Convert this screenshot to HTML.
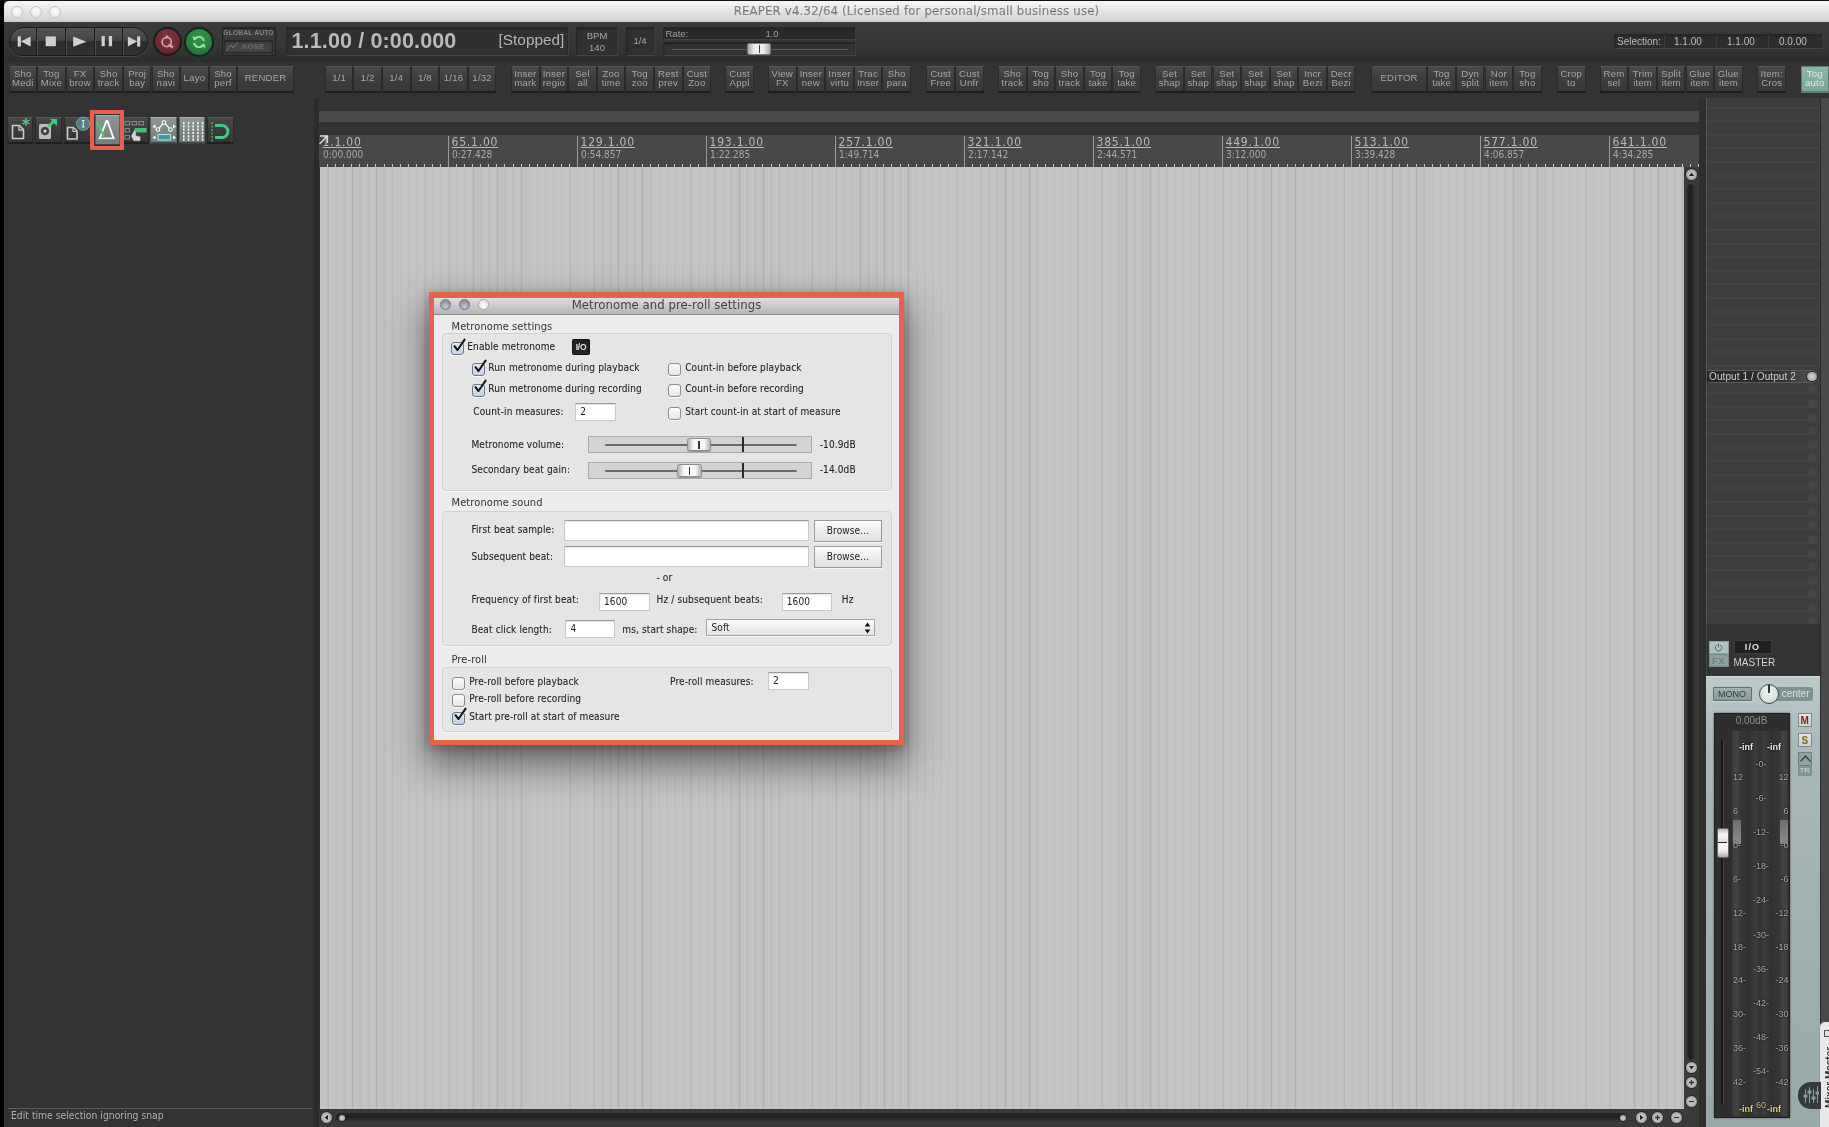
<!DOCTYPE html><html><head><meta charset="utf-8"><title>REAPER</title><style>
*{box-sizing:border-box;margin:0;padding:0}
html,body{width:1829px;height:1127px;overflow:hidden;background:#333;}
body{position:relative;will-change:transform;font-family:"Liberation Sans",sans-serif;color:#b4b4b4;}
.abs{position:absolute}
.lg{font-family:"DejaVu Sans Condensed","DejaVu Sans",sans-serif;}
#titlebar{left:4px;top:1px;width:1825px;height:21px;background:linear-gradient(#f6f6f6,#e4e4e4 50%,#cfcfcf);border-radius:5px 0 0 0;}
#titlebar .t{position:absolute;left:0;right:0;top:3.2px;text-align:center;font-size:13px;color:#898989;letter-spacing:.2px}
.tl{position:absolute;top:5px;width:12px;height:12px;border-radius:50%;border:1px solid #c4c4c4;background:radial-gradient(circle at 50% 30%,#fafafa,#e6e6e6);}
#topbar{left:4px;top:22px;width:1825px;height:40px;background:linear-gradient(#3b3b3b,#353535 60%,#2c2c2c);}
#toolrow{left:4px;top:62px;width:1825px;height:36px;background:#333;}
.tb{position:absolute;top:66px;height:27px;width:28.6px;background:linear-gradient(#4a4a4a,#3d3d3d 50%,#383838);border:1px solid #2a2a2a;border-top-color:#555;border-bottom:2px solid #1e1e1e;font-size:9.6px;letter-spacing:.2px;line-height:9px;color:#a6a6a6;text-align:center;overflow:hidden;white-space:nowrap;padding-top:2px}
.tb.one{line-height:21px;padding-top:0}
.tb.on{background:linear-gradient(#8fb5a8,#7da597);color:#d8ebe4;border-color:#5b7f72}
</style></head><body>
<div class="abs" style="left:0;top:0;width:4px;height:1127px;background:#000"></div>
<div class="abs" style="left:0;top:0;width:1829px;height:1px;background:#111"></div>
<div id="titlebar" class="abs lg"><span class="tl" style="left:7px"></span><span class="tl" style="left:26px"></span><span class="tl" style="left:45px"></span><div class="t">REAPER v4.32/64 (Licensed for personal/small business use)</div></div>
<div id="topbar" class="abs"></div>
<div id="toolrow" class="abs"></div>
<div class="tb" style="left:8.5px;width:28.6px">Sho<br>Medi</div>
<div class="tb" style="left:37.1px;width:28.6px">Tog<br>Mixe</div>
<div class="tb" style="left:65.7px;width:28.6px">FX<br>brow</div>
<div class="tb" style="left:94.3px;width:28.6px">Sho<br>track</div>
<div class="tb" style="left:122.9px;width:28.6px">Proj<br>bay</div>
<div class="tb" style="left:151.5px;width:28.6px">Sho<br>navi</div>
<div class="tb one" style="left:180.1px;width:28.6px">Layo</div>
<div class="tb" style="left:208.7px;width:28.6px">Sho<br>perf</div>
<div class="tb one" style="left:237.3px;width:56.5px">RENDER</div>
<div class="tb one" style="left:324.8px;width:28.6px">1/1</div>
<div class="tb one" style="left:353.4px;width:28.6px">1/2</div>
<div class="tb one" style="left:382.0px;width:28.6px">1/4</div>
<div class="tb one" style="left:410.6px;width:28.6px">1/8</div>
<div class="tb one" style="left:439.2px;width:28.6px">1/16</div>
<div class="tb one" style="left:467.8px;width:28.6px">1/32</div>
<div class="tb" style="left:511.0px;width:28.6px">Inser<br>mark</div>
<div class="tb" style="left:539.6px;width:28.6px">Inser<br>regio</div>
<div class="tb" style="left:568.2px;width:28.6px">Sel<br>all</div>
<div class="tb" style="left:596.8px;width:28.6px">Zoo<br>time</div>
<div class="tb" style="left:625.4px;width:28.6px">Tog<br>zoo</div>
<div class="tb" style="left:654.0px;width:28.6px">Rest<br>prev</div>
<div class="tb" style="left:682.6px;width:28.6px">Cust<br>Zoo</div>
<div class="tb" style="left:725.3px;width:28.6px">Cust<br>Appl</div>
<div class="tb" style="left:768.0px;width:28.6px">View<br>FX</div>
<div class="tb" style="left:796.6px;width:28.6px">Inser<br>new</div>
<div class="tb" style="left:825.2px;width:28.6px">Inser<br>virtu</div>
<div class="tb" style="left:853.8px;width:28.6px">Trac<br>Inser</div>
<div class="tb" style="left:882.4px;width:28.6px">Sho<br>para</div>
<div class="tb" style="left:926.4px;width:28.6px">Cust<br>Free</div>
<div class="tb" style="left:955.0px;width:28.6px">Cust<br>Unfr</div>
<div class="tb" style="left:998.0px;width:28.6px">Sho<br>track</div>
<div class="tb" style="left:1026.6px;width:28.6px">Tog<br>sho</div>
<div class="tb" style="left:1055.2px;width:28.6px">Sho<br>track</div>
<div class="tb" style="left:1083.8px;width:28.6px">Tog<br>take</div>
<div class="tb" style="left:1112.4px;width:28.6px">Tog<br>take</div>
<div class="tb" style="left:1155.3px;width:28.6px">Set<br>shap</div>
<div class="tb" style="left:1183.9px;width:28.6px">Set<br>shap</div>
<div class="tb" style="left:1212.5px;width:28.6px">Set<br>shap</div>
<div class="tb" style="left:1241.1px;width:28.6px">Set<br>shap</div>
<div class="tb" style="left:1269.7px;width:28.6px">Set<br>shap</div>
<div class="tb" style="left:1298.3px;width:28.6px">Incr<br>Bezi</div>
<div class="tb" style="left:1326.9px;width:28.6px">Decr<br>Bezi</div>
<div class="tb one" style="left:1370.8px;width:56.5px">EDITOR</div>
<div class="tb" style="left:1427.3px;width:28.6px">Tog<br>take</div>
<div class="tb" style="left:1455.9px;width:28.6px">Dyn<br>split</div>
<div class="tb" style="left:1484.5px;width:28.6px">Nor<br>item</div>
<div class="tb" style="left:1513.1px;width:28.6px">Tog<br>sho</div>
<div class="tb" style="left:1557.0px;width:28.6px">Crop<br>to</div>
<div class="tb" style="left:1599.7px;width:28.6px">Rem<br>sel</div>
<div class="tb" style="left:1628.3px;width:28.6px">Trim<br>item</div>
<div class="tb" style="left:1656.9px;width:28.6px">Split<br>item</div>
<div class="tb" style="left:1685.5px;width:28.6px">Glue<br>item</div>
<div class="tb" style="left:1714.1px;width:28.6px">Glue<br>item</div>
<div class="tb" style="left:1757.4px;width:28.6px">Item:<br>Cros</div>
<div class="tb on" style="left:1800.5px;width:28.6px">Tog<br>auto</div>
<style>
#pill{left:9px;top:27px;width:139px;height:29px;border-radius:14.5px;background:linear-gradient(#555 0%,#444 45%,#2b2b2b 52%,#333 100%);border:1px solid #1a1a1a;box-shadow:0 1px 0 #4a4a4a;overflow:hidden}
#pill i{position:absolute;top:0;width:1px;height:29px;background:#1c1c1c;box-shadow:1px 0 0 #505050}
.circ{width:28px;height:28px;border-radius:50%;border:1.5px solid #1d1d1d}
.box{background:#303030;border:1px solid #262626;border-bottom-color:#454545;border-right-color:#3e3e3e;box-shadow:inset 0 1px 2px #222}
</style>
<div id="pill" class="abs"><i style="left:26px"></i><i style="left:55px"></i><i style="left:84px"></i><i style="left:112px"></i></div>
<svg class="abs" style="left:9px;top:27px" width="139" height="29" viewBox="0 0 139 29" fill="#cfcfcf"><rect x="8.7" y="9.4" width="3.2" height="10.2"/><path d="M21.6 9.4v10.2l-9.7-5.100z"/><rect x="36.700" y="9.400" width="10.200" height="9.800"/><path d="M64.200 9.600v10.200l13.300-5.100z"/><rect x="92.600" y="9" width="3.200" height="10.200"/><rect x="99.800" y="9" width="3.300" height="10.200"/><path d="M118.800 9.400v10.200l9.500-5.100z"/><rect x="128.100" y="9.400" width="3.100" height="10.200"/></svg>
<div class="abs circ" style="left:152.5px;top:27px;width:29px;height:29px;border:2px solid #1f1b1b;background:radial-gradient(circle at 50% 30%,#7f373d,#6b2b31 60%,#53202a)"></div>
<svg class="abs" style="left:153px;top:27.5px" width="28" height="28" viewBox="0 0 28 28" fill="none" stroke="#d9a0a5" stroke-width="1.7"><circle cx="13.7" cy="14" r="4.6"/><path d="M15.5 16.5l4.5 3" stroke-width="2.2"/><path d="M13 6.800l3.200 2.400-3.600 1.600z" fill="#d9a0a5" stroke="none"/></svg>
<div class="abs circ" style="left:184px;top:26.5px;width:30px;height:30px;border:2px solid #16261a;background:radial-gradient(circle at 50% 30%,#36934a,#2a7f3b 60%,#1d6429)"></div>
<svg class="abs" style="left:185px;top:27.5px" width="28" height="28" viewBox="0 0 28 28" fill="none" stroke="#9be4a8" stroke-width="1.800"><path d="M9.600 11.500a5 5 0 0 1 9.300 1.500M18.400 16.500a5 5 0 0 1 -9.300 -1.500"/><path d="M7.500 8l1.200 4.600 3.600-2.200z" fill="#9be4a8" stroke="none"/><path d="M20.500 20l-1.200-4.600-3.600 2.200z" fill="#9be4a8" stroke="none"/></svg>
<div class="abs box" style="left:221.5px;top:26.5px;width:54px;height:29px;background:#3a3a3a;border-color:#242424"></div>
<div class="abs" style="left:221.5px;top:29px;width:54px;text-align:center;font-size:6.8px;font-weight:bold;letter-spacing:.1px;color:#858585;white-space:nowrap">GLOBAL AUTO</div>
<div class="abs box" style="left:224px;top:40px;width:49px;height:12.5px;background:#444;border-color:#2a2a2a"></div>
<svg class="abs" style="left:226px;top:41.5px" width="12" height="10" viewBox="0 0 12 10" fill="none" stroke="#777" stroke-width="1"><path d="M0 9 5 3 7 6 12 0"/></svg>
<div class="abs" style="left:242px;top:42.5px;width:30px;font-size:7px;font-weight:bold;letter-spacing:.6px;color:#6a6a6a">NONE</div>
<div class="abs box" style="left:286px;top:27px;width:282.5px;height:28.5px"></div>
<div class="abs" style="left:291.5px;top:26.7px;font-size:21.6px;line-height:27px;font-weight:bold;color:#b9b9b9;letter-spacing:.1px;white-space:nowrap">1.1.00 / 0:00.000</div>
<div class="abs" style="left:498.5px;top:30.3px;font-size:15.4px;line-height:20px;color:#b2b2b2;white-space:nowrap">[Stopped]</div>
<div class="abs box" style="left:576px;top:27px;width:42px;height:28.5px"></div>
<div class="abs" style="left:576px;top:29.5px;width:42px;text-align:center;font-size:9.5px;line-height:12.5px;color:#a8a8a8">BPM<br>140</div>
<div class="abs box" style="left:625.5px;top:27px;width:29px;height:28.5px"></div>
<div class="abs" style="left:625.5px;top:35px;width:29px;text-align:center;font-size:9.5px;line-height:12px;color:#a8a8a8">1/4</div>
<div class="abs box" style="left:662.5px;top:26.5px;width:193.5px;height:13.5px;background:#2a2a2a"></div>
<div class="abs" style="left:665.5px;top:27.5px;font-size:9.5px;line-height:11px;color:#a0a0a0">Rate:</div>
<div class="abs" style="left:742px;top:27.5px;width:60px;text-align:center;font-size:9.5px;line-height:11px;color:#a0a0a0">1.0</div>
<div class="abs box" style="left:662.5px;top:41.5px;width:193.5px;height:14.5px;background:#333"></div>
<div class="abs" style="left:672px;top:48.5px;width:176px;height:1px;background:#5a5a5a"></div>
<div class="abs" style="left:747px;top:43px;width:24px;height:12px;border-radius:2px;background:linear-gradient(90deg,#aaa,#eee 30%,#eee 70%,#aaa);border:1px solid #777"></div>
<div class="abs" style="left:758.5px;top:45px;width:1.5px;height:8px;background:#444"></div>
<div class="abs box" style="left:1614px;top:34px;width:209px;height:15px;background:#2e2e2e"></div>
<div class="abs" style="left:1617px;top:36px;font-size:10px;line-height:11px;color:#bdbdbd;white-space:nowrap">Selection:</div>
<div class="abs" style="left:1674px;top:36px;font-size:10px;line-height:11px;color:#bdbdbd">1.1.00</div>
<div class="abs" style="left:1727px;top:36px;font-size:10px;line-height:11px;color:#bdbdbd">1.1.00</div>
<div class="abs" style="left:1779px;top:36px;font-size:10px;line-height:11px;color:#bdbdbd">0.0.00</div>
<div class="abs" style="left:1664px;top:35px;width:1px;height:13px;background:#3c3c3c"></div>
<div class="abs" style="left:1716px;top:35px;width:1px;height:13px;background:#3c3c3c"></div>
<div class="abs" style="left:1768px;top:35px;width:1px;height:13px;background:#3c3c3c"></div>
<style>
#lane{left:319px;top:110.5px;width:1380px;height:11.5px;background:#4a4a4a}
#ruler{left:319px;top:134.5px;width:1380px;height:32.5px;background:#484848;overflow:hidden}
#ruler .m{position:absolute;top:1px;width:1px;height:32px;background:#9a9a9a}
#ruler .n{position:absolute;top:0px;font-size:12px;line-height:14px;color:#b9b9b9;text-decoration:underline;white-space:nowrap;letter-spacing:.8px}
#ruler .s{position:absolute;top:14.5px;font-size:10px;line-height:12px;color:#a9a9a9;white-space:nowrap}
#ruler .k{position:absolute;top:29.5px;width:1px;height:3px;background:#c8c8c8}
#grid{left:319.5px;top:167px;width:1364.5px;height:942px;background-color:#c2c4c3;
 background-image:repeating-linear-gradient(90deg,rgba(0,0,0,.04) 0,rgba(0,0,0,.04) 1.4px,transparent 1.4px,transparent 8.0625px),repeating-linear-gradient(90deg,rgba(0,0,0,.05) 0,rgba(0,0,0,.05) .8px,transparent .8px,transparent 24.1875px);background-position:7.5px 0,8px 0}
#vsb{left:1684px;top:167px;width:15px;height:942px;background:#3a3a3a}
#hsb{left:319px;top:1109px;width:1380px;height:18px;background:#3a3a3a}
.rb{position:absolute;width:11px;height:11px;border-radius:50%;background:radial-gradient(circle,#d6d6d6 0,#b0b0b0 55%,#7a7a7a 100%);box-shadow:0 0 0 1px #2a2a2a}
.rb svg{position:absolute;left:0;top:0}
</style>
<div class="abs" style="left:314px;top:98px;width:5px;height:1029px;background:#2b2b2b"></div>
<div id="lane" class="abs"></div>
<div id="ruler" class="abs lg"><span class="n" style="left:3.5px">1.1.00</span><span class="s" style="left:4px">0:00.000</span><i class="m" style="left:129px"></i><span class="n" style="left:132.5px">65.1.00</span><span class="s" style="left:133px">0:27.428</span><i class="m" style="left:258px"></i><span class="n" style="left:261.5px">129.1.00</span><span class="s" style="left:262px">0:54.857</span><i class="m" style="left:387px"></i><span class="n" style="left:390.5px">193.1.00</span><span class="s" style="left:391px">1:22.285</span><i class="m" style="left:516px"></i><span class="n" style="left:519.5px">257.1.00</span><span class="s" style="left:520px">1:49.714</span><i class="m" style="left:645px"></i><span class="n" style="left:648.5px">321.1.00</span><span class="s" style="left:649px">2:17.142</span><i class="m" style="left:774px"></i><span class="n" style="left:777.5px">385.1.00</span><span class="s" style="left:778px">2:44.571</span><i class="m" style="left:903px"></i><span class="n" style="left:906.5px">449.1.00</span><span class="s" style="left:907px">3:12.000</span><i class="m" style="left:1032px"></i><span class="n" style="left:1035.5px">513.1.00</span><span class="s" style="left:1036px">3:39.428</span><i class="m" style="left:1161px"></i><span class="n" style="left:1164.5px">577.1.00</span><span class="s" style="left:1165px">4:06.857</span><i class="m" style="left:1290px"></i><span class="n" style="left:1293.5px">641.1.00</span><span class="s" style="left:1294px">4:34.285</span><i class="k" style="left:8.1px"></i><i class="k" style="left:16.1px"></i><i class="k" style="left:24.2px"></i><i class="k" style="left:32.2px"></i><i class="k" style="left:40.3px"></i><i class="k" style="left:48.4px"></i><i class="k" style="left:56.4px"></i><i class="k" style="left:64.5px"></i><i class="k" style="left:72.6px"></i><i class="k" style="left:80.6px"></i><i class="k" style="left:88.7px"></i><i class="k" style="left:96.8px"></i><i class="k" style="left:104.8px"></i><i class="k" style="left:112.9px"></i><i class="k" style="left:120.9px"></i><i class="k" style="left:137.1px"></i><i class="k" style="left:145.1px"></i><i class="k" style="left:153.2px"></i><i class="k" style="left:161.2px"></i><i class="k" style="left:169.3px"></i><i class="k" style="left:177.4px"></i><i class="k" style="left:185.4px"></i><i class="k" style="left:193.5px"></i><i class="k" style="left:201.6px"></i><i class="k" style="left:209.6px"></i><i class="k" style="left:217.7px"></i><i class="k" style="left:225.8px"></i><i class="k" style="left:233.8px"></i><i class="k" style="left:241.9px"></i><i class="k" style="left:249.9px"></i><i class="k" style="left:266.1px"></i><i class="k" style="left:274.1px"></i><i class="k" style="left:282.2px"></i><i class="k" style="left:290.2px"></i><i class="k" style="left:298.3px"></i><i class="k" style="left:306.4px"></i><i class="k" style="left:314.4px"></i><i class="k" style="left:322.5px"></i><i class="k" style="left:330.6px"></i><i class="k" style="left:338.6px"></i><i class="k" style="left:346.7px"></i><i class="k" style="left:354.8px"></i><i class="k" style="left:362.8px"></i><i class="k" style="left:370.9px"></i><i class="k" style="left:378.9px"></i><i class="k" style="left:395.1px"></i><i class="k" style="left:403.1px"></i><i class="k" style="left:411.2px"></i><i class="k" style="left:419.2px"></i><i class="k" style="left:427.3px"></i><i class="k" style="left:435.4px"></i><i class="k" style="left:443.4px"></i><i class="k" style="left:451.5px"></i><i class="k" style="left:459.6px"></i><i class="k" style="left:467.6px"></i><i class="k" style="left:475.7px"></i><i class="k" style="left:483.8px"></i><i class="k" style="left:491.8px"></i><i class="k" style="left:499.9px"></i><i class="k" style="left:507.9px"></i><i class="k" style="left:524.1px"></i><i class="k" style="left:532.1px"></i><i class="k" style="left:540.2px"></i><i class="k" style="left:548.2px"></i><i class="k" style="left:556.3px"></i><i class="k" style="left:564.4px"></i><i class="k" style="left:572.4px"></i><i class="k" style="left:580.5px"></i><i class="k" style="left:588.6px"></i><i class="k" style="left:596.6px"></i><i class="k" style="left:604.7px"></i><i class="k" style="left:612.8px"></i><i class="k" style="left:620.8px"></i><i class="k" style="left:628.9px"></i><i class="k" style="left:636.9px"></i><i class="k" style="left:653.1px"></i><i class="k" style="left:661.1px"></i><i class="k" style="left:669.2px"></i><i class="k" style="left:677.2px"></i><i class="k" style="left:685.3px"></i><i class="k" style="left:693.4px"></i><i class="k" style="left:701.4px"></i><i class="k" style="left:709.5px"></i><i class="k" style="left:717.6px"></i><i class="k" style="left:725.6px"></i><i class="k" style="left:733.7px"></i><i class="k" style="left:741.8px"></i><i class="k" style="left:749.8px"></i><i class="k" style="left:757.9px"></i><i class="k" style="left:765.9px"></i><i class="k" style="left:782.1px"></i><i class="k" style="left:790.1px"></i><i class="k" style="left:798.2px"></i><i class="k" style="left:806.2px"></i><i class="k" style="left:814.3px"></i><i class="k" style="left:822.4px"></i><i class="k" style="left:830.4px"></i><i class="k" style="left:838.5px"></i><i class="k" style="left:846.6px"></i><i class="k" style="left:854.6px"></i><i class="k" style="left:862.7px"></i><i class="k" style="left:870.8px"></i><i class="k" style="left:878.8px"></i><i class="k" style="left:886.9px"></i><i class="k" style="left:894.9px"></i><i class="k" style="left:911.1px"></i><i class="k" style="left:919.1px"></i><i class="k" style="left:927.2px"></i><i class="k" style="left:935.2px"></i><i class="k" style="left:943.3px"></i><i class="k" style="left:951.4px"></i><i class="k" style="left:959.4px"></i><i class="k" style="left:967.5px"></i><i class="k" style="left:975.6px"></i><i class="k" style="left:983.6px"></i><i class="k" style="left:991.7px"></i><i class="k" style="left:999.8px"></i><i class="k" style="left:1007.8px"></i><i class="k" style="left:1015.9px"></i><i class="k" style="left:1023.9px"></i><i class="k" style="left:1040.1px"></i><i class="k" style="left:1048.1px"></i><i class="k" style="left:1056.2px"></i><i class="k" style="left:1064.2px"></i><i class="k" style="left:1072.3px"></i><i class="k" style="left:1080.4px"></i><i class="k" style="left:1088.4px"></i><i class="k" style="left:1096.5px"></i><i class="k" style="left:1104.6px"></i><i class="k" style="left:1112.6px"></i><i class="k" style="left:1120.7px"></i><i class="k" style="left:1128.8px"></i><i class="k" style="left:1136.8px"></i><i class="k" style="left:1144.9px"></i><i class="k" style="left:1152.9px"></i><i class="k" style="left:1169.1px"></i><i class="k" style="left:1177.1px"></i><i class="k" style="left:1185.2px"></i><i class="k" style="left:1193.2px"></i><i class="k" style="left:1201.3px"></i><i class="k" style="left:1209.4px"></i><i class="k" style="left:1217.4px"></i><i class="k" style="left:1225.5px"></i><i class="k" style="left:1233.6px"></i><i class="k" style="left:1241.6px"></i><i class="k" style="left:1249.7px"></i><i class="k" style="left:1257.8px"></i><i class="k" style="left:1265.8px"></i><i class="k" style="left:1273.9px"></i><i class="k" style="left:1281.9px"></i><i class="k" style="left:1298.1px"></i><i class="k" style="left:1306.1px"></i><i class="k" style="left:1314.2px"></i><i class="k" style="left:1322.2px"></i><i class="k" style="left:1330.3px"></i><i class="k" style="left:1338.4px"></i><i class="k" style="left:1346.4px"></i><i class="k" style="left:1354.5px"></i><i class="k" style="left:1362.6px"></i><i class="k" style="left:1370.6px"></i><i class="k" style="left:1378.7px"></i></div>
<svg class="abs" style="left:319px;top:135px" width="10" height="10" viewBox="0 0 10 10" fill="none" stroke="#e8d8d8" stroke-width="1.3"><path d="M0.5 9 8 1.5M1 1h7.5v7"/></svg>
<div id="grid" class="abs"></div>
<div id="vsb" class="abs"><span class="rb" style="left:2px;top:2px"><svg width="11" height="11" viewBox="0 0 11 11"><path d="M5.500 3.500 8 7H3z" fill="#222"/></svg></span><div style="position:absolute;left:2.5px;top:17px;width:9px;height:876px;border-radius:4.5px;background:linear-gradient(90deg,#2a2a2a,#1e1e1e 40%,#3a3a3a)"></div><span class="rb" style="left:2px;top:895px"><svg width="11" height="11" viewBox="0 0 11 11"><path d="M5.500 7.500 8 4H3z" fill="#222"/></svg></span><span class="rb" style="left:2px;top:910px"><svg width="11" height="11" viewBox="0 0 11 11"><path d="M5.500 3v5M3 5.500h5" stroke="#333" stroke-width="1.300" fill="none"/></svg></span><span class="rb" style="left:2px;top:929px"><svg width="11" height="11" viewBox="0 0 11 11"><path d="M3 5.500h5" stroke="#333" stroke-width="1.300" fill="none"/></svg></span></div>
<div id="hsb" class="abs"><span class="rb" style="left:2px;top:3px"><svg width="11" height="11" viewBox="0 0 11 11"><path d="M3.500 5.500 7 3v5z" fill="#222"/></svg></span><div style="position:absolute;left:17px;top:4px;width:1290px;height:9px;border-radius:4.5px;background:linear-gradient(#2a2a2a,#1e1e1e 40%,#3a3a3a)"></div><span class="rb" style="left:20px;top:5.5px;width:6px;height:6px"></span><span class="rb" style="left:1301px;top:5.5px;width:6px;height:6px"></span><span class="rb" style="left:1317px;top:3px"><svg width="11" height="11" viewBox="0 0 11 11"><path d="M7.500 5.500 4 3v5z" fill="#222"/></svg></span><span class="rb" style="left:1333px;top:3px"><svg width="11" height="11" viewBox="0 0 11 11"><path d="M5.500 3v5M3 5.500h5" stroke="#333" stroke-width="1.300" fill="none"/></svg></span><span class="rb" style="left:1352px;top:3px"><svg width="11" height="11" viewBox="0 0 11 11"><path d="M3 5.500h5" stroke="#333" stroke-width="1.300" fill="none"/></svg></span></div>
<div class="abs" style="left:8px;top:1107.5px;width:304px;height:1px;background:#5c5c5c"></div>
<div class="abs lg" style="left:11px;top:1109px;font-size:10.3px;line-height:13px;color:#b0b0b0;white-space:nowrap">Edit time selection ignoring snap</div>
<style>
#rp{left:1699px;top:98px;width:130px;height:1029px;background:#2e2e2e}
#rpin{position:absolute;left:7px;top:0;width:114px;height:526px;background-color:#3e3e3e;
 background-image:repeating-linear-gradient(180deg,transparent 0,transparent 12.6px,#484848 12.6px,#484848 13.6px);background-position:0 -3.5px;border-left:1px solid #555}
#rstrip{position:absolute;left:121px;top:0;width:9px;height:1029px;background:#4a4a4a;border-left:1px solid #2c2c2c}
.mx{font-size:9px;line-height:10px;color:#a9a9a9;position:absolute;white-space:nowrap;text-shadow:0 0 2px #000}
</style>
<div id="rp" class="abs"><div id="rpin"></div><div id="rstrip"></div><span style="position:absolute;left:108.5px;top:287.3px;width:9px;height:9px;border-radius:50%;background:#454545"></span><span style="position:absolute;left:108.5px;top:300.9px;width:9px;height:9px;border-radius:50%;background:#454545"></span><span style="position:absolute;left:108.5px;top:314.5px;width:9px;height:9px;border-radius:50%;background:#454545"></span><span style="position:absolute;left:108.5px;top:328.1px;width:9px;height:9px;border-radius:50%;background:#454545"></span><span style="position:absolute;left:108.5px;top:341.7px;width:9px;height:9px;border-radius:50%;background:#454545"></span><span style="position:absolute;left:108.5px;top:355.3px;width:9px;height:9px;border-radius:50%;background:#454545"></span><span style="position:absolute;left:108.5px;top:368.9px;width:9px;height:9px;border-radius:50%;background:#454545"></span><span style="position:absolute;left:108.5px;top:382.5px;width:9px;height:9px;border-radius:50%;background:#454545"></span><span style="position:absolute;left:108.5px;top:396.1px;width:9px;height:9px;border-radius:50%;background:#454545"></span><span style="position:absolute;left:108.5px;top:409.7px;width:9px;height:9px;border-radius:50%;background:#454545"></span><span style="position:absolute;left:108.5px;top:423.3px;width:9px;height:9px;border-radius:50%;background:#454545"></span><span style="position:absolute;left:108.5px;top:436.9px;width:9px;height:9px;border-radius:50%;background:#454545"></span><span style="position:absolute;left:108.5px;top:450.5px;width:9px;height:9px;border-radius:50%;background:#454545"></span><span style="position:absolute;left:108.5px;top:464.1px;width:9px;height:9px;border-radius:50%;background:#454545"></span><span style="position:absolute;left:108.5px;top:477.7px;width:9px;height:9px;border-radius:50%;background:#454545"></span><span style="position:absolute;left:108.5px;top:491.3px;width:9px;height:9px;border-radius:50%;background:#454545"></span><span style="position:absolute;left:108.5px;top:504.9px;width:9px;height:9px;border-radius:50%;background:#454545"></span><span style="position:absolute;left:108.5px;top:518.5px;width:9px;height:9px;border-radius:50%;background:#454545"></span><span style="position:absolute;left:108.5px;top:532.1px;width:9px;height:9px;border-radius:50%;background:#454545"></span><div style="position:absolute;left:7.5px;top:272px;width:111px;height:12.5px;border-radius:2px 6px 6px 2px;background:linear-gradient(90deg,#262626,#2e2e2e 60%,#555 100%);border:1px solid #5a5a5a;border-left-color:#222"></div><div style="position:absolute;left:10px;top:272.5px;font-size:10px;line-height:12px;color:#cfcfcf;white-space:nowrap;letter-spacing:.1px">Output 1 / Output 2</div><span class="rb" style="left:108px;top:273.5px;width:9.5px;height:9.5px"></span><div style="position:absolute;left:7px;top:526px;width:114px;height:52px;background:#343434;border-left:1px solid #444"></div><div style="position:absolute;left:9.5px;top:542.5px;width:20.5px;height:13px;background:#b0c2bf;border:1px solid #8da29f"></div><svg style="position:absolute;left:15px;top:544.5px" width="9" height="9" viewBox="0 0 9 9" fill="none" stroke="#4f6360" stroke-width="1"><path d="M2.7 2.2a3.2 3.2 0 1 0 3.6 0M4.5 0.5v4"/></svg><div style="position:absolute;left:9.5px;top:555.5px;width:20.5px;height:13.5px;background:#8aa19e;border:1px solid #748b88;font-size:9px;line-height:12px;color:#5c7370;text-align:center;letter-spacing:1px">FX</div><div style="position:absolute;left:34.5px;top:542px;width:38px;height:13.5px;background:#1f1f1f;border:1px solid #3c3c3c;font-size:9px;font-weight:bold;line-height:12px;color:#e4e4e4;text-align:center;letter-spacing:1.2px">I/O</div><div style="position:absolute;left:34.5px;top:558px;font-size:10px;line-height:13px;color:#d2d2d2">MASTER</div><div style="position:absolute;left:7px;top:577.5px;width:114px;height:452px;background:linear-gradient(#bccaca,#a9b9b9 15%,#9eafaf 60%,#99aaaa);border-top:1px solid #d0dada"></div><div style="position:absolute;left:13.5px;top:588.5px;width:39px;height:14px;background:linear-gradient(#9fb2b0,#889c9a);border:1px solid #5f7472;border-radius:1px;font-size:9px;line-height:12px;text-align:center;color:#2c3a39;box-shadow:0 1px 0 #c8d4d3">MONO</div><div style="position:absolute;left:70px;top:588.5px;width:44px;height:14.5px;border-radius:2px;background:#7e9391;font-size:10px;line-height:14px;color:#d5e2e0;text-align:right;padding-right:3.5px">center</div><div style="position:absolute;left:59.5px;top:585.5px;width:20px;height:20px;border-radius:50%;background:radial-gradient(circle at 50% 40%,#f2f6f5,#d4dddc 70%,#b8c4c3);border:1.5px solid #3b4b4a"></div><div style="position:absolute;left:69px;top:587px;width:1.5px;height:8px;background:#2c3a39"></div><div style="position:absolute;left:14.5px;top:614.5px;width:76px;height:405.5px;background:#2e2e2e;border:1px solid #222;box-shadow:0 0 2px #556"></div><div style="position:absolute;left:33px;top:633px;width:56px;height:385px;background:linear-gradient(90deg,#3a3a3a,#444 8%,#363636 16%,#303030 30%,#3c3c3c 42%,#333 50%,#3c3c3c 58%,#303030 70%,#363636 84%,#444 92%,#3a3a3a)"></div><div class="mx" style="left:14.5px;top:618px;width:76px;text-align:center;font-size:10px;color:#8f8f8f;text-shadow:none">0.00dB</div><div style="position:absolute;left:21.5px;top:642px;width:3.5px;height:364px;background:#161616;border-right:1px solid #444"></div><div style="position:absolute;left:34px;top:722px;width:8px;height:24px;background:linear-gradient(#6e6e6e,#8a8a8a)"></div><div style="position:absolute;left:81px;top:722px;width:8px;height:24px;background:linear-gradient(#6e6e6e,#8a8a8a)"></div><div style="position:absolute;left:17.5px;top:729.5px;width:12px;height:30px;border-radius:2px;background:linear-gradient(#bbb,#f4f4f4 20%,#e0e0e0 45%,#fff 55%,#e8e8e8 80%,#aaa);border:1px solid #666"></div><div style="position:absolute;left:19px;top:743.5px;width:9px;height:1.5px;background:#222"></div><div class="mx" style="left:40px;top:644px;font-weight:bold;color:#e8e8e8">-inf</div><div class="mx" style="left:68px;top:644px;font-weight:bold;color:#e8e8e8">-inf</div><div class="mx" style="left:47px;top:661.0px;width:30px;text-align:center">-0-</div><div class="mx" style="left:47px;top:695.1px;width:30px;text-align:center">-6-</div><div class="mx" style="left:47px;top:729.2px;width:30px;text-align:center">-12-</div><div class="mx" style="left:47px;top:763.3px;width:30px;text-align:center">-18-</div><div class="mx" style="left:47px;top:797.4px;width:30px;text-align:center">-24-</div><div class="mx" style="left:47px;top:831.5px;width:30px;text-align:center">-30-</div><div class="mx" style="left:47px;top:865.6px;width:30px;text-align:center">-36-</div><div class="mx" style="left:47px;top:899.7px;width:30px;text-align:center">-42-</div><div class="mx" style="left:47px;top:933.8px;width:30px;text-align:center">-48-</div><div class="mx" style="left:47px;top:967.9px;width:30px;text-align:center">-54-</div><div class="mx" style="left:47px;top:1001.5px;width:30px;text-align:center;color:#c8c070">60</div><div class="mx" style="left:34px;top:674.0px">12</div><div class="mx" style="left:70px;top:674.0px;width:19.5px;text-align:right">12</div><div class="mx" style="left:34px;top:707.9px">6</div><div class="mx" style="left:70px;top:707.9px;width:19.5px;text-align:right">6</div><div class="mx" style="left:34px;top:741.8px">0-</div><div class="mx" style="left:70px;top:741.8px;width:19.5px;text-align:right">-0</div><div class="mx" style="left:34px;top:775.7px">6-</div><div class="mx" style="left:70px;top:775.7px;width:19.5px;text-align:right">-6</div><div class="mx" style="left:34px;top:809.6px">12-</div><div class="mx" style="left:70px;top:809.6px;width:19.5px;text-align:right">-12</div><div class="mx" style="left:34px;top:843.5px">18-</div><div class="mx" style="left:70px;top:843.5px;width:19.5px;text-align:right">-18</div><div class="mx" style="left:34px;top:877.4px">24-</div><div class="mx" style="left:70px;top:877.4px;width:19.5px;text-align:right">-24</div><div class="mx" style="left:34px;top:911.3px">30-</div><div class="mx" style="left:70px;top:911.3px;width:19.5px;text-align:right">-30</div><div class="mx" style="left:34px;top:945.2px">36-</div><div class="mx" style="left:70px;top:945.2px;width:19.5px;text-align:right">-36</div><div class="mx" style="left:34px;top:979.1px">42-</div><div class="mx" style="left:70px;top:979.1px;width:19.5px;text-align:right">-42</div><div class="mx" style="left:40px;top:1005.5px;font-weight:bold;color:#e6d85a">-inf</div><div class="mx" style="left:68px;top:1005.5px;font-weight:bold;color:#e6d85a">-inf</div><div style="position:absolute;left:98.5px;top:614.5px;width:14.5px;height:14.5px;background:linear-gradient(#e6e6e2,#cfcfca);border:1px solid #7d8c8b;font-size:10px;font-weight:bold;line-height:13px;text-align:center;color:#8a1c24">M</div><div style="position:absolute;left:98.5px;top:634.5px;width:14.5px;height:14.5px;background:linear-gradient(#e6e6e2,#cfcfca);border:1px solid #7d8c8b;font-size:10px;font-weight:bold;line-height:13px;text-align:center;color:#7a6a18">S</div><div style="position:absolute;left:98.5px;top:654px;width:14.5px;height:13.5px;background:#8fa4a2;border:1px solid #6c817f"></div><svg style="position:absolute;left:100.5px;top:657px" width="11" height="7" viewBox="0 0 11 7" fill="none" stroke="#33413f" stroke-width="1.3"><path d="M0.5 6.5 5.5 1 10.5 6.5"/></svg><div style="position:absolute;left:98.5px;top:667.5px;width:14.5px;height:10.5px;background:#7f9593;font-size:8px;line-height:10px;text-align:center;color:#cfdedc">TR</div><div style="position:absolute;left:120px;top:924px;width:10px;height:105px;background:#e8e8e8;border-left:1px solid #999;border-radius:6px 0 0 0"></div><div style="position:absolute;left:102px;top:975px;width:58px;height:12px;transform:rotate(-90deg);transform-origin:center;font-size:10px;font-weight:bold;line-height:12px;color:#333;white-space:nowrap">Mixer Master</div><div style="position:absolute;left:98.500px;top:983.5px;width:23px;height:27.500px;border-radius:13px 0 0 13px;background:#343a3a"></div><svg style="position:absolute;left:103.500px;top:988px" width="16" height="18" viewBox="0 0 16 18" stroke="#8a9a98" stroke-width="1" fill="#8a9a98"><path d="M2.5 3v14M6.5 1v16M10.5 3v14M14.5 0v17" fill="none"/><rect x="1" y="9" width="3" height="2"/><rect x="5" y="5" width="3" height="2"/><rect x="9" y="11" width="3" height="2"/><rect x="13" y="6" width="3" height="2"/></svg><div style="position:absolute;left:124.500px;top:932px;width:7px;height:7px;border:1px solid #555;background:#ddd"></div></div>
<style>
#dlg{left:429px;top:292px;width:475px;height:453px;background:#e8614b;box-shadow:0 18px 34px 3px rgba(0,0,0,.45),0 3px 10px 1px rgba(0,0,0,.25)}
#din{position:absolute;left:5px;top:6px;width:465px;height:442px;background:#ececec;font-size:10px;letter-spacing:.13px;color:#222;overflow:hidden}
#dt{position:absolute;left:0;top:0;width:465px;height:16.5px;background:linear-gradient(#dedede,#c6c6c6 60%,#b4b4b4);border-bottom:1px solid #8e8e8e;text-align:center;font-size:13px;line-height:13px;color:#444;letter-spacing:.05px}
.dl{position:absolute;top:.6px;width:11px;height:11px;border-radius:50%;border:1px solid #6f7a86;background:radial-gradient(circle at 50% 75%,#c2ccd6,#8694a2 70%)}
.gb{position:absolute;left:8px;width:450px;border:1px solid #d2d2d2;border-radius:4px;background:#e5e5e5;box-shadow:0 1px 0 #f6f6f6}
.gl{position:absolute;left:17.5px;font-size:11px;letter-spacing:.1px;line-height:13px;color:#333;white-space:nowrap}
.t{position:absolute;line-height:14px;white-space:nowrap;-webkit-text-stroke:.1px #333}
.cb{position:absolute;width:13px;height:13px;border-radius:3px;border:1px solid #8d8d8d;background:linear-gradient(#fdfdfd,#e6e6e6);box-shadow:0 1px 0 #fff}
.cb.on{background:linear-gradient(#e4ecf8,#c3d0e4);border-color:#6d7687}
.in{position:absolute;background:#fff;border:1px solid #c9c9c9;border-top-color:#9c9c9c;box-shadow:inset 0 1px 1px #e2e2e2;line-height:16px;padding-left:4px}
.sl{position:absolute;left:153.5px;width:224px;height:17.5px;background:#d3d3d3;border:1px solid #a9a9a9}
.sl b{position:absolute;left:16px;top:7px;width:192px;height:2.5px;background:#6c6c6c;border-radius:1px}
.sl i{position:absolute;left:153.5px;top:0;width:1.5px;height:15.5px;background:#2a2a2a}
.sl u{position:absolute;top:1.5px;width:24.5px;height:13px;border-radius:2.5px;background:linear-gradient(90deg,#b4b4b4,#f6f6f6 25%,#fff 50%,#f6f6f6 75%,#b4b4b4);border:1px solid #8c8c8c;box-shadow:0 1px 1px rgba(0,0,0,.3)}
.sl u:after{content:"";position:absolute;left:10.5px;top:2px;width:1.5px;height:7.5px;background:#333}
.bt{position:absolute;left:380px;width:68px;height:22px;background:linear-gradient(#fcfcfc,#ededed 50%,#e2e2e2);border:1px solid #9a9a9a;box-shadow:0 1px 0 #f8f8f8;text-align:center;line-height:20px}
</style>
<div id="dlg" class="abs"><div id="din" class="lg"><div id="dt"><span class="dl" style="left:6px"></span><span class="dl" style="left:25px"></span><span class="dl" style="left:44px;background:radial-gradient(circle at 50% 70%,#fff,#dcdcdc);border-color:#a8a8a8"></span>Metronome and pre-roll settings</div><span class="gl" style="top:21.5px">Metronome settings</span><div class="gb" style="top:34.5px;height:158px"></div><span class="cb on" style="left:16.5px;top:44.0px"></span><svg style="position:absolute;left:17.5px;top:39.5px" width="15" height="15" viewBox="0 0 15 15" fill="none" stroke="#16181c" stroke-width="2.1" stroke-linecap="round" stroke-linejoin="round"><path d="M2.5 8.2 5.5 12 12.6 1.6"/></svg><span class="t" style="left:33.3px;top:42.2px;">Enable metronome</span><span style="position:absolute;left:138px;top:40.5px;width:18px;height:16px;background:#232323;border-radius:1.5px;border:1px solid #111;color:#e0e0e0;font-family:'Liberation Sans',sans-serif;font-size:8.5px;font-weight:bold;line-height:14px;text-align:center;letter-spacing:-.2px">I/O</span><span class="cb on" style="left:37.5px;top:65.0px"></span><svg style="position:absolute;left:38.5px;top:60.5px" width="15" height="15" viewBox="0 0 15 15" fill="none" stroke="#16181c" stroke-width="2.1" stroke-linecap="round" stroke-linejoin="round"><path d="M2.5 8.2 5.5 12 12.6 1.6"/></svg><span class="t" style="left:54.3px;top:63.2px;">Run metronome during playback</span><span class="cb" style="left:234.2px;top:65.0px"></span><span class="t" style="left:251.2px;top:63.2px;">Count-in before playback</span><span class="cb on" style="left:37.5px;top:85.7px"></span><svg style="position:absolute;left:38.5px;top:81.2px" width="15" height="15" viewBox="0 0 15 15" fill="none" stroke="#16181c" stroke-width="2.1" stroke-linecap="round" stroke-linejoin="round"><path d="M2.5 8.2 5.5 12 12.6 1.6"/></svg><span class="t" style="left:54.3px;top:83.9px;">Run metronome during recording</span><span class="cb" style="left:234.2px;top:85.7px"></span><span class="t" style="left:251.2px;top:83.9px;">Count-in before recording</span><span class="t" style="left:39.3px;top:107.3px;">Count-in measures:</span><span class="in" style="left:141.3px;top:104.5px;width:40.7px;height:18.5px">2</span><span class="cb" style="left:234.2px;top:109.0px"></span><span class="t" style="left:251.2px;top:107.3px;">Start count-in at start of measure</span><span class="t" style="left:37.4px;top:139.5px;">Metronome volume:</span><div class="sl" style="top:137.5px"><b></b><i></i><u style="left:98px"></u></div><span class="t" style="left:385.7px;top:139.5px;">-10.9dB</span><span class="t" style="left:37.4px;top:165.3px;">Secondary beat gain:</span><div class="sl" style="top:163.5px"><b></b><i></i><u style="left:88.5px"></u></div><span class="t" style="left:385.7px;top:165.3px;">-14.0dB</span><span class="gl" style="top:198px">Metronome sound</span><div class="gb" style="top:212.5px;height:135.5px"></div><span class="t" style="left:37.4px;top:224.8px;">First beat sample:</span><span class="in" style="left:130.0px;top:221.6px;width:245.0px;height:21.8px"></span><span class="bt" style="top:221.5px">Browse...</span><span class="t" style="left:37.4px;top:252.2px;">Subsequent beat:</span><span class="in" style="left:130.0px;top:247.5px;width:245.0px;height:21.9px"></span><span class="bt" style="top:247.5px">Browse...</span><span class="t" style="left:222.5px;top:273.2px;">- or</span><span class="t" style="left:37.4px;top:295.4px;">Frequency of first beat:</span><span class="in" style="left:165.0px;top:294.6px;width:50.6px;height:18.5px">1600</span><span class="t" style="left:222.5px;top:295.4px;">Hz / subsequent beats:</span><span class="in" style="left:347.7px;top:294.6px;width:50.5px;height:18.5px">1600</span><span class="t" style="left:407.8px;top:295.4px;">Hz</span><span class="t" style="left:37.4px;top:325.2px;">Beat click length:</span><span class="in" style="left:131.4px;top:322.2px;width:49.6px;height:18.3px">4</span><span class="t" style="left:188.3px;top:325.2px;">ms, start shape:</span><span style="position:absolute;left:272px;top:320.5px;width:169px;height:17.5px;background:linear-gradient(#fdfdfd,#efefef 50%,#e4e4e4);border:1px solid #a4a4a4;box-shadow:0 1px 0 #f8f8f8;line-height:15px;padding-left:4.5px;font-size:10px">Soft</span><svg style="position:absolute;left:430px;top:323.5px" width="7" height="12" viewBox="0 0 7 12" fill="#111"><path d="M3.5 0.5 6.3 4.5H0.7zM3.5 11.5 6.3 7.5H0.7z"/></svg><span class="gl" style="top:355px">Pre-roll</span><div class="gb" style="top:368.5px;height:65px"></div><span class="cb" style="left:18.0px;top:379.0px"></span><span class="t" style="left:35.2px;top:377.4px;">Pre-roll before playback</span><span class="t" style="left:236.1px;top:377.4px;">Pre-roll measures:</span><span class="in" style="left:334.0px;top:374.1px;width:41.0px;height:18.3px">2</span><span class="cb" style="left:18.0px;top:396.0px"></span><span class="t" style="left:35.2px;top:394.3px;">Pre-roll before recording</span><span class="cb on" style="left:18.0px;top:413.8px"></span><svg style="position:absolute;left:19.0px;top:409.3px" width="15" height="15" viewBox="0 0 15 15" fill="none" stroke="#16181c" stroke-width="2.1" stroke-linecap="round" stroke-linejoin="round"><path d="M2.5 8.2 5.5 12 12.6 1.6"/></svg><span class="t" style="left:35.2px;top:412.1px;">Start pre-roll at start of measure</span></div></div>
<style>
.ib{position:absolute;top:116.5px;width:26.5px;height:27px;background:linear-gradient(#474747,#3a3a3a 55%,#343434);border:1px solid #2a2a2a;border-top-color:#565656;border-bottom:2px solid #1f1f1f}
.ib.on{background:linear-gradient(#8d9794,#7c8784 60%,#737e7b);border-color:#59615f;border-top-color:#a4adaa;border-bottom:2px solid #3e4543}
.ib svg{position:absolute;left:-2px;top:-3px;overflow:visible}
</style>
<div class="ib" style="left:6.8px"><svg width="26" height="26" viewBox="0 0 26 26"><path d="M6.5 10.5h7l4 4v9h-11z" fill="none" stroke="#c9c9c9" stroke-width="1.6"/><path d="M13 10.5v4.5h4.5" fill="none" stroke="#c9c9c9" stroke-width="1.3"/><path d="M20 3v8M16.5 5l7 4M23.5 5l-7 4" stroke="#4fd08a" stroke-width="1.4" fill="none"/></svg></div>
<div class="ib" style="left:35.3px"><svg width="26" height="26" viewBox="0 0 26 26"><rect x="5" y="9" width="12" height="15" rx="1.5" fill="#bdbdbd"/><circle cx="11" cy="16" r="4.3" fill="#444"/><circle cx="11" cy="16" r="1.5" fill="#ddd"/><path d="M14 12l6-6" stroke="#3fcf76" stroke-width="2.6"/><path d="M16 4h7v7z" fill="#3fcf76"/></svg></div>
<div class="ib" style="left:64px"><svg width="26" height="26" viewBox="0 0 26 26"><path d="M4.5 12.5h6l3.5 3.5v8h-9.500z" fill="none" stroke="#c9c9c9" stroke-width="1.6"/><path d="M10 12.5v4h4" fill="none" stroke="#c9c9c9" stroke-width="1.2"/><circle cx="20.200" cy="8.700" r="6.600" fill="#557d84" stroke="#7da5ab" stroke-width="1"/><path d="M20.200 5.500v6.400M18.800 5.500h2.800M18.800 11.900h2.800" stroke="#d8f4f4" stroke-width="1.100" fill="none"/></svg></div>
<div class="ib on" style="left:94.5px;width:25.5px;top:115px;height:30px;border-width:1px"><svg width="26" height="26" viewBox="0 0 26 26"><g transform="translate(-1.9,-0.9)"><path d="M7.8 26.2 14.3 8.800 15.300 8.800 21.400 26.200" fill="none" stroke="#fff" stroke-width="1.800" stroke-linejoin="round"/><path d="M6.500 26.200h16" stroke="#f4f4f4" stroke-width="1.700"/><path d="M4.800 10 12.400 25.500" stroke="#3fd070" stroke-width="2.100"/><path d="M6.500 14.500l3.500 1-1.500 3.300z" fill="#3fd070"/></g></svg></div>
<div class="ib" style="left:122.5px"><svg width="26" height="26" viewBox="0 0 26 26"><g transform="translate(0.5,3)"><g fill="none" stroke="#7d8a86" stroke-width="1.1"><rect x="2.500" y="3.500" width="4.500" height="3.500"/><rect x="9.500" y="3.500" width="4.500" height="3.500"/><rect x="16.500" y="3.500" width="4.500" height="3.500"/><rect x="2.500" y="10.500" width="4.500" height="3.500"/><rect x="2.500" y="17.500" width="4.500" height="3.500"/></g><rect x="12" y="10" width="12" height="4.500" fill="#3fbf74"/><path d="M11 13.500c0-2 2.500-2 2.500 0v4l4.500 1v4.500h-7l-2.500-5z" fill="#d8d8d8" stroke="#555" stroke-width=".6"/></g></svg></div>
<div class="ib on" style="left:150.3px"><svg width="26" height="26" viewBox="0 0 26 26"><g transform="translate(2,3)"><path d="M7 11.500 13 4.500 19.500 11.500" fill="none" stroke="#f0f0f0" stroke-width="1.300"/><circle cx="7" cy="11.500" r="1.800" fill="#7c8784" stroke="#fff" stroke-width="1.100"/><circle cx="13" cy="4.500" r="1.800" fill="#7c8784" stroke="#fff" stroke-width="1.100"/><circle cx="19.500" cy="11.500" r="1.800" fill="#7c8784" stroke="#fff" stroke-width="1.100"/><rect x="7" y="16.500" width="12.500" height="5.500" fill="#3f9a9a" stroke="#b9e4e2" stroke-width="1"/><path d="M1.500 8.500 4.500 6.500v4zM25 8.500 22 6.500v4zM1.500 19.500 4.500 17.500v4zM25 19.500 22 17.500v4z" fill="#fff"/></g></svg></div>
<div class="ib on" style="left:178.8px"><svg width="26" height="26" viewBox="0 0 26 26"><g transform="translate(2,3)"><g stroke="#f2f2f2" stroke-width="1.600" stroke-dasharray="2.200 1.100"><path d="M3.800 4v19M8.500 4v19M13.200 4v19M17.900 4v19M22.600 4v19"/></g></g></svg></div>
<div class="ib" style="left:207.2px"><svg width="26" height="26" viewBox="0 0 26 26"><g transform="translate(2,3)"><path d="M7 7.500h7a6 6 0 0 1 0 12H7" fill="none" stroke="#46c882" stroke-width="3"/><path d="M4 4v20" stroke="#46c882" stroke-width="1.200" stroke-dasharray="2 1.500"/><path d="M23.800 4v20" stroke="#555" stroke-width="1" stroke-dasharray="2 1.500"/></g></svg></div>
<div class="abs" style="left:90.2px;top:110.1px;width:33.8px;height:40.4px;border:4.9px solid #ea5f4b"></div>
<!--MAIN-->
</body></html>
